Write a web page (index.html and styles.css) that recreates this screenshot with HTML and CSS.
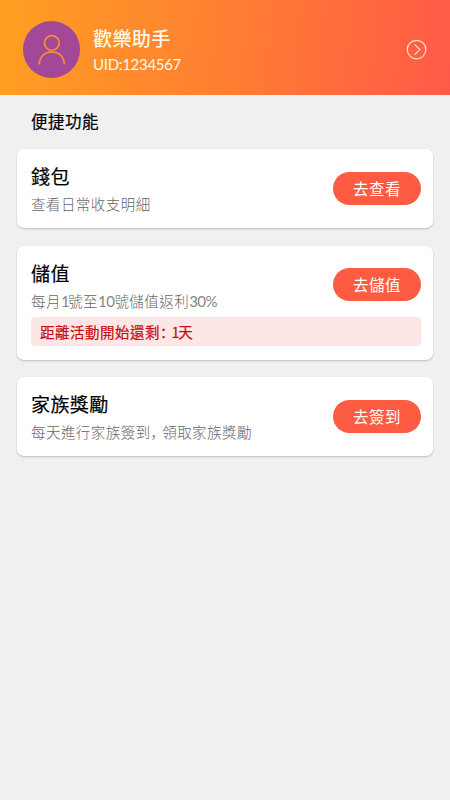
FILE: index.html
```html
<!DOCTYPE html>
<html lang="zh-Hant">
<head>
<meta charset="utf-8">
<title>歡樂助手</title>
<link rel="stylesheet" href="styles.css">
</head>
<body>
<header class="profile">
  <div class="avatar">
    <svg width="30" height="32" viewBox="0 0 30 32" fill="none" stroke="#f58a42" stroke-width="1.8"><circle cx="14.8" cy="9" r="7.4"/><path d="M2.2 30.5C2.7 22.6 7.5 18 14.8 18S26.9 22.6 27.4 30.5"/></svg>
  </div>
  <div class="identity">
    <h1 class="name">歡樂助手</h1>
    <p class="uid">UID:1234567</p>
  </div>
  <svg class="arrow" width="22" height="22" viewBox="0 0 22 22" fill="none" stroke="#ffe0c8" stroke-width="1.2"><circle cx="10.6" cy="10.6" r="9.3"/><path d="M8.6 5.3 13.8 10.6 8.6 15.9"/></svg>
</header>
<main class="content">
  <h2 class="section-title">便捷功能</h2>
  <section class="card">
    <div class="row">
      <div class="info"><h3 class="title">錢包</h3><p class="desc">查看日常收支明細</p></div>
      <button class="action">去查看</button>
    </div>
  </section>
  <section class="card card-notice">
    <div class="row">
      <div class="info"><h3 class="title">儲值</h3><p class="desc">每月<span class="num num-one">1</span>號至<span class="num num-ten">10</span>號儲值返利<span class="num">30%</span></p></div>
      <button class="action">去儲值</button>
    </div>
    <p class="notice">距離活動開始還剩<span class="punct" lang="zh-CN">：</span><span class="days">1</span>天</p>
  </section>
  <section class="card">
    <div class="row">
      <div class="info"><h3 class="title">家族獎勵</h3><p class="desc">每天進行家族簽到<span class="punct" lang="zh-CN">，</span>領取家族獎勵</p></div>
      <button class="action">去簽到</button>
    </div>
  </section>
</main>
</body>
</html>
```
FILE: styles.css
```css
* { box-sizing: border-box; margin: 0; padding: 0; }
body {
  min-height: 800px;
  background: #f0f0f1;
  font-family: "Noto Sans CJK SC", sans-serif;
  font-weight: 400;
}
.profile {
  display: flex;
  align-items: center;
  height: 95px;
  padding: 4px 22px 0 23px;
  background: linear-gradient(95deg, #ff9f22 0%, #ff7b34 55%, #ff5a47 100%);
}
.avatar {
  display: flex;
  align-items: center;
  justify-content: center;
  width: 57px;
  height: 57px;
  border-radius: 50%;
  background: #a34896;
}
.identity { flex: 1; padding: 4px 0 0 13px; color: #fff8e8; }
.name { font-size: 19px; font-weight: 500; line-height: 26px; letter-spacing: 0.4px; }
.uid { font-family: Lato, sans-serif; font-size: 15px; line-height: 27px; letter-spacing: -0.3px; }
.content { padding: 14px 17px 0; }
.section-title {
  padding-left: 14px;
  margin-bottom: 16px;
  font-size: 16.5px;
  font-weight: 400;
  line-height: 24px;
  letter-spacing: 0.5px;
  color: #000;
  -webkit-text-stroke: 0.2px #000;
}
.card {
  height: 79px;
  margin-bottom: 18px;
  padding: 13px 12px 0 14px;
  border-radius: 7px;
  background: #fff;
  box-shadow: 0 1px 2px rgba(0, 0, 0, 0.22);
}
.card-notice { height: 114px; margin-bottom: 17px; }
.row { display: flex; justify-content: space-between; }
.info { height: 52px; }
.title {
  font-size: 19px;
  font-weight: 400;
  line-height: 28px;
  letter-spacing: 0.4px;
  color: #000;
  -webkit-text-stroke: 0.2px #000;
}
.desc { font-size: 14.5px; font-weight: 300; line-height: 28px; letter-spacing: 0.45px; color: #666; white-space: nowrap; }
.num { font-family: Lato, sans-serif; font-size: 15px; font-weight: 400; line-height: 1; letter-spacing: -0.5px; color: #858585; }
.num-one { letter-spacing: -1.5px; }
.num-ten { letter-spacing: -0.5px; }
.punct { letter-spacing: -2.9px; }
.action {
  width: 88px;
  height: 33px;
  margin-top: 10px;
  border: 0;
  border-radius: 17px;
  background: #fd5c43;
  color: #fff;
  font-family: inherit;
  font-size: 15.5px;
  line-height: 33px;
  letter-spacing: 0.5px;
}
.card-notice .action { margin-top: 9px; }
.notice {
  height: 29px;
  margin-top: 6px;
  padding-left: 9px;
  border-radius: 4px;
  background: #fde6e6;
  color: #c80c0c;
  font-size: 14.5px;
  font-weight: 400;
  line-height: 29px;
  letter-spacing: 0.5px;
  -webkit-text-stroke: 0.2px #c80c0c;
}
.days { letter-spacing: -1.5px; }
```
